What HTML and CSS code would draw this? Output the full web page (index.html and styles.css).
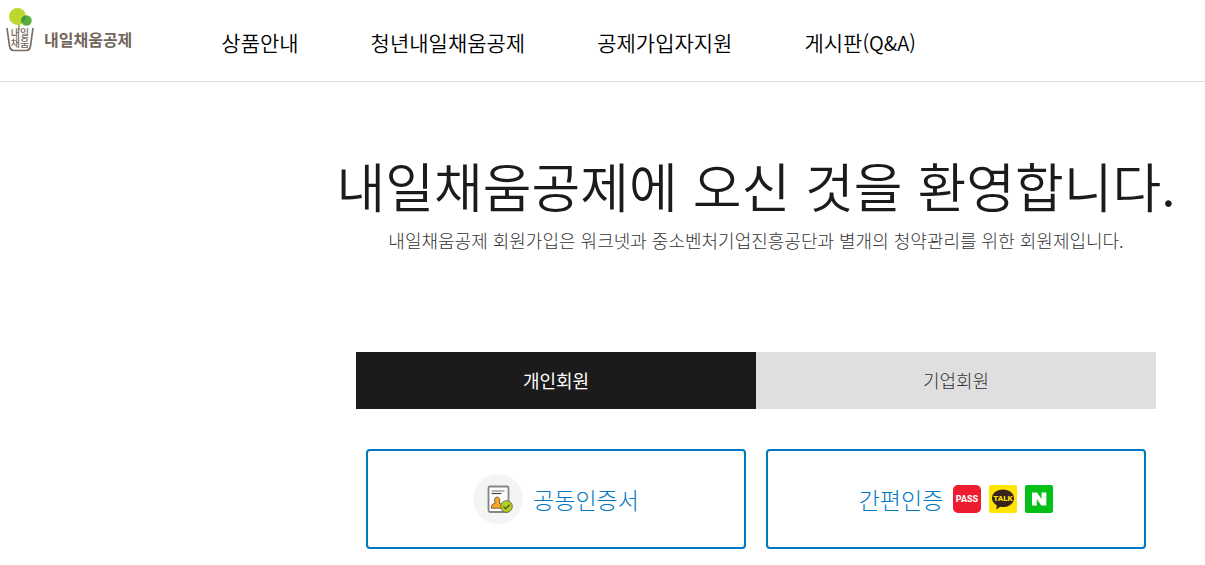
FILE: index.html
```html
<!DOCTYPE html>
<html lang="ko">
<head>
<meta charset="utf-8">
<meta name="viewport" content="width=device-width, initial-scale=1">
<title>내일채움공제</title>
<link rel="stylesheet" href="styles.css">
</head>
<body>
<header class="header">
  <a class="logo" href="#">
    <svg class="logo-mark" viewBox="0 0 32 48" aria-hidden="true">
      <path d="M13 17v8" stroke="#8db62f" stroke-width="1.500"/>
      <circle cx="11.500" cy="11.500" r="8.500" fill="#bdd630"/>
      <circle cx="20.500" cy="15.500" r="5.200" fill="#5cae3a"/>
      <path d="M16.800 11.900a5.200 5.200 0 0 0-1 6 8.500 8.500 0 0 0 4-7.500 5.200 5.200 0 0 0-3 1.500z" fill="#399b39"/>
      <path d="M1 23l2.500 18q.8 4.500 4.500 4.500h12q3.700 0 4.500-4.500L27 23" fill="none" stroke="#7b6d61" stroke-width="1.700"/>
      <text class="logo-cup" text-anchor="middle"><tspan x="14" y="32">내일</tspan><tspan x="14" y="42">채움</tspan></text>
    </svg>
    <span class="logo-name">내일채움공제</span>
  </a>
  <nav class="nav">
    <a class="nav-link" href="#">상품안내</a>
    <a class="nav-link" href="#">청년내일채움공제</a>
    <a class="nav-link" href="#">공제가입자지원</a>
    <a class="nav-link" href="#">게시판<span class="nav-latin">(Q&amp;A)</span></a>
  </nav>
</header>
<main class="main">
  <h1 class="title">내일채움공제에 오신 것을 환영합니다.</h1>
  <p class="subtitle">내일채움공제 회원가입은 워크넷과 중소벤처기업진흥공단과 별개의 청약관리를 위한 회원제입니다.</p>
  <div class="panel">
    <div class="tabs" role="tablist">
      <button class="tab tab-active" type="button" role="tab" aria-selected="true">개인회원</button>
      <button class="tab" type="button" role="tab" aria-selected="false">기업회원</button>
    </div>
    <div class="methods">
      <button class="method" type="button">
        <svg class="cert-icon" viewBox="0 0 50 50" aria-hidden="true">
          <circle cx="25" cy="25" r="25" fill="#f4f4f4"/>
          <rect x="15.500" y="12.500" width="20" height="25.500" rx="1.500" fill="#fff" stroke="#858585" stroke-width="1.800"/>
          <path d="M18.500 17h13" stroke="#858585" stroke-width="1.200"/>
          <path d="M18.500 19.500h10" stroke="#444" stroke-width="1.200"/>
          <path d="M22 28c-2.400-6.500 6.900-6.500 4.500 0v1.500c2.700.3 3.700 1.500 3.700 4.700H18.300c0-3.200 1-4.400 3.700-4.700z" fill="#fba62b" stroke="#79613b"/>
          <circle cx="33.500" cy="32.500" r="5.800" fill="#b3cf24" stroke="#6d742f"/>
          <path d="M30.500 32.500l2.200 2.200 4-4" fill="none" stroke="#536019" stroke-width="1.400"/>
        </svg>
        <span>공동인증서</span>
      </button>
      <button class="method" type="button">
        <span>간편인증</span>
        <span class="badges">
          <svg class="badge" viewBox="0 0 28 28" aria-hidden="true">
            <rect width="28" height="28" rx="5" fill="#ed1c31"/>
            <text class="badge-pass" x="14" y="17" text-anchor="middle">PASS</text>
          </svg>
          <svg class="badge" viewBox="0 0 28 28" aria-hidden="true">
            <rect width="28" height="28" rx="2" fill="#ffe600"/>
            <path d="M14 4.500c6.300 0 11 3.700 11 8.700s-4.700 8.800-11 8.800c-1 0-1.900-.1-2.800-.3L7.200 24.500l.6-4.200C4.900 18.700 3 16.200 3 13.200c0-5 4.700-8.700 11-8.700z" fill="#39231b"/>
            <text class="badge-talk" x="14" y="16" text-anchor="middle">TALK</text>
          </svg>
          <svg class="badge" viewBox="0 0 28 28" aria-hidden="true">
            <rect width="28" height="28" rx="2" fill="#04c018"/>
            <path d="M7 7.500h5l4.500 6.500V7.500h4.800v13h-5L11.800 14v6.500H7z" fill="#fff"/>
          </svg>
        </span>
      </button>
    </div>
  </div>
</main>
</body>
</html>
```
FILE: styles.css
```css
* {
  box-sizing: border-box;
}

body {
  margin: 0;
  background: #fff;
  color: #1b1b1b;
  font-family: "Noto Sans CJK KR", sans-serif;
  font-weight: 300;
}

a {
  color: inherit;
  text-decoration: none;
}

.header {
  display: flex;
  align-items: flex-start;
  gap: 89px;
  height: 82px;
  padding: 5px 6px;
  border-bottom: 1px solid #ddd;
}

.logo {
  display: flex;
  align-items: center;
  gap: 6px;
  color: #72665c;
  font-size: 16px;
  font-weight: 700;
  line-height: 24px;
}

.logo-mark {
  width: 32px;
  height: 48px;
}

.logo-name {
  padding-top: 20px;
}

.logo-cup {
  fill: #72665c;
  font-size: 10px;
  font-weight: 500;
}

.nav {
  display: flex;
  gap: 72px;
  padding-top: 22px;
  color: #000;
  font-size: 21px;
  font-weight: 350;
  line-height: 30px;
  white-space: nowrap;
}

.nav-latin {
  font-size: 20px;
}

.main {
  display: flex;
  flex-direction: column;
  align-items: center;
  margin-left: 307px;
  padding-top: 67px;
  text-align: center;
}

.title {
  margin: 0;
  font-size: 53px;
  font-weight: 350;
  line-height: 72px;
  white-space: nowrap;
}

.subtitle {
  margin: 5px 0 0;
  color: #333;
  font-size: 18px;
  line-height: 28px;
  white-space: nowrap;
}

.panel {
  width: 100%;
  max-width: 800px;
  margin-top: 98px;
}

.tabs {
  display: grid;
  grid-template-columns: 1fr 1fr;
}

.tab {
  padding: 14px;
  border: 0;
  background: #dfdfdf;
  color: #333;
  font: inherit;
  font-size: 18px;
  line-height: 29px;
}

.tab-active {
  background: #1b1b1b;
  color: #fff;
  font-weight: 400;
}

.methods {
  display: grid;
  grid-template-columns: 1fr 1fr;
  gap: 20px;
  padding: 40px 10px 16px;
}

.method {
  display: flex;
  align-items: center;
  justify-content: center;
  gap: 10px;
  height: 100px;
  border: 2px solid #0079c2;
  border-radius: 4px;
  background: #fff;
  color: #0079c2;
  font: inherit;
  font-size: 23px;
  line-height: 32px;
}

.cert-icon {
  width: 50px;
  height: 50px;
}

.badges {
  display: flex;
  gap: 8px;
}

.badge {
  width: 28px;
  height: 28px;
}

.badge-pass {
  fill: #fff;
  font-family: Roboto, sans-serif;
  font-size: 9px;
  font-weight: 800;
}

.badge-talk {
  fill: #ffe600;
  font-family: Roboto, sans-serif;
  font-size: 8px;
  font-weight: 800;
}
```
